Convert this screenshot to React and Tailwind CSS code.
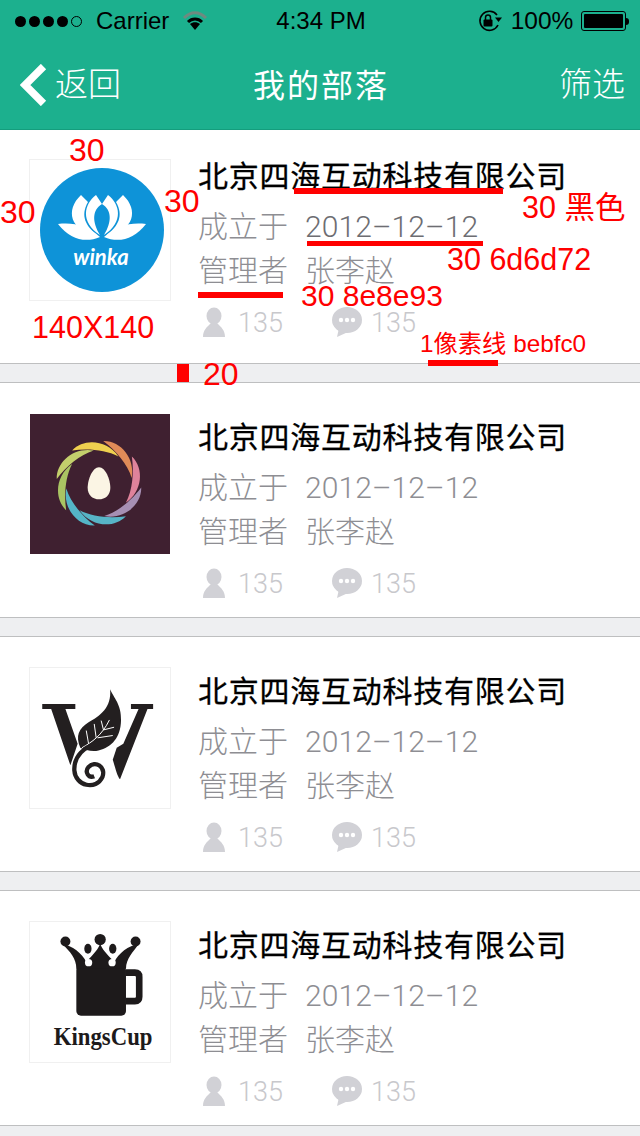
const cjk = "font-['Liberation_Sans','Noto_Sans_CJK_SC',sans-serif]";

function Winka() {
  return (
    <svg viewBox="0 0 140 140" className="w-full h-full">
      <circle cx="72" cy="70" r="62" fill="#0e93d8" />
      <g fill="#fff">
        <path d="M28 64C44 62 58 66 70 77C56 83 40 80 28 64Z" />
        <path d="M116 64C100 62 86 66 74 77C88 83 104 80 116 64Z" />
        <path d="M51 35C35 50 40 71 67 75C56 66 50 56 58 42Z" />
        <path d="M93 35C109 50 104 71 77 75C88 66 94 56 86 42Z" />
        <path d="M66 35C54 44 50 62 70 75C62 62 62 50 72 44Z" />
        <path d="M78 35C90 44 94 62 74 75C82 62 82 50 72 44Z" />
      </g>
      <text x="71" y="105" textAnchor="middle" fill="#fff" fontSize="22" fontWeight="700" fontStyle="italic" fontFamily="Lato, sans-serif">winka</text>
    </svg>
  );
}

function Egg() {
  const colors = ["#efd04f", "#e08b58", "#df839b", "#a68fb3", "#57b4c6", "#54b5c7", "#a9c463", "#c3cf6c"];
  return (
    <svg viewBox="30 27 420 420" className="w-full h-full">
      <rect x="30" y="27" width="420" height="420" fill="#3f2030" />
      <g transform="translate(237 235)">
        {colors.map((c, i) => (
          <path key={c + i} transform={`rotate(${i * 45}) scale(1.12)`} fill={c} d="M-72 -88C-40 -122 22 -116 52 -72C18 -90 -30 -94 -72 -88Z" />
        ))}
        <path d="M0 -48C20 -48 34 -10 34 14C34 36 18 48 0 48C-18 48 -34 36 -34 14C-34 -10 -20 -48 0 -48Z" fill="#fbf5e4" />
      </g>
    </svg>
  );
}

function Vine() {
  return (
    <svg viewBox="28 21 423 423" className="w-full h-full">
      <g fill="#231f20">
        <path d="M65 130H165V145H135L172 250L150 315L92 145H65Z" />
        <path d="M333 130H400V145H383L300 357C292 350 285 320 278 298L290 262L310 250L356 145H333Z" />
        <path d="M270 85C280 110 305 130 303 180C302 230 275 262 235 270C215 275 195 268 180 262C165 225 175 205 205 185C240 165 275 140 270 85Z" stroke="#fff" strokeWidth="5" paintOrder="stroke" />
      </g>
      <g fill="none" stroke="#fff" strokeWidth="3">
        <path d="M185 262C215 245 245 225 268 178" />
        <path d="M232 232L278 225M250 208L282 200M205 250L198 210M228 232L222 190M250 208L243 180" />
      </g>
      <path d="M240 248C190 255 160 290 162 330C165 378 228 392 247 350C258 318 225 300 205 320C192 335 205 355 222 348" fill="none" stroke="#231f20" strokeWidth="13" />
    </svg>
  );
}

function Cup() {
  return (
    <svg viewBox="28 19 423 423" className="w-full h-full">
      <g fill="#1d1a1b">
        <rect x="168" y="150" width="150" height="152" rx="14" />
        <path d="M318 172H345Q358 172 358 185V245Q358 258 345 258H318" fill="none" stroke="#1d1a1b" strokeWidth="20" />
        <circle cx="135" cy="78" r="15" />
        <circle cx="240" cy="72" r="17" />
        <circle cx="347" cy="78" r="15" />
        <path d="M125 85C150 110 168 130 168 160H318C318 130 340 110 357 85C325 90 295 115 283 140C270 125 250 110 240 85C230 110 210 125 198 140C186 115 155 90 125 85Z" />
        <ellipse cx="203" cy="100" rx="11" ry="15" />
        <ellipse cx="278" cy="100" rx="11" ry="15" />
      </g>
      <circle cx="205" cy="142" r="11" fill="#fff" />
      <circle cx="276" cy="142" r="11" fill="#fff" />
      <text x="249" y="392" textAnchor="middle" textLength="298" lengthAdjust="spacingAndGlyphs" fill="#1d1a1b" fontSize="76" fontWeight="700" fontFamily="'Liberation Serif', serif">KingsCup</text>
    </svg>
  );
}

function Person() {
  return (
    <svg viewBox="0 0 22 30" className="w-[22px] h-[30px]">
      <ellipse cx="11" cy="9" rx="7.5" ry="8.5" fill="#d1d1d6" />
      <path d="M0 30C0 23 4 20 8 16H14C18 20 22 23 22 30Z" fill="#d1d1d6" />
    </svg>
  );
}

function Bubble() {
  return (
    <svg viewBox="0 0 30 30" className="w-[30px] h-[30px]">
      <ellipse cx="15" cy="13" rx="15" ry="13" fill="#d1d1d6" />
      <path d="M7 21L5 30L16 25Z" fill="#d1d1d6" />
      <circle cx="9" cy="13" r="2.2" fill="#fff" />
      <circle cx="15" cy="13" r="2.2" fill="#fff" />
      <circle cx="21" cy="13" r="2.2" fill="#fff" />
    </svg>
  );
}

function Card({ first, logo, framed, dateClass }) {
  return (
    <section className={`flex bg-white pl-[29px] border-b border-[#bebfc0] mb-[18px] ${first ? "h-[234px]" : "h-[236px] border-t"}`}>
      <div className={`w-[142px] h-[142px] shrink-0 ${first ? "mt-[29px]" : "mt-[30px]"} ${framed ? "border border-[#f0f0f0]" : "p-px"}`}>
        {logo}
      </div>
      <div className={`ml-[27px] flex flex-col ${first ? "pt-[21px]" : "pt-[29px]"}`}>
        <div className="h-[46px] flex items-center text-[30px] text-black font-normal tracking-[0.75px] [-webkit-text-stroke:0.3px_#000] font-['Noto_Sans_CJK_SC',sans-serif]">北京四海互动科技有限公司</div>
        <div className="mt-[5px] h-[44px] flex items-center text-[30px] font-['Noto_Sans_CJK_SC',sans-serif] font-light">
          <span className="w-[107px] text-[#8e8e93]">成立于</span>
          <span className={`pt-[4px] font-['Roboto',sans-serif] font-light tracking-[0.1px] ${dateClass}`}>2012–12–12</span>
        </div>
        <div className="h-[44px] flex items-center text-[30px] text-[#8e8e93] font-['Noto_Sans_CJK_SC',sans-serif] font-light">
          <span className="w-[107px]">管理者</span>
          <span>张李赵</span>
        </div>
        <div className="mt-[10px] h-[44px] flex items-center text-[27px] text-[#c8c8cc] font-['Roboto',sans-serif] font-light">
          <span className="ml-[5px]"><Person /></span>
          <span className="ml-[13px] w-[94px] pt-[2px]">135</span>
          <Bubble />
          <span className="ml-[9px] pt-[2px]">135</span>
        </div>
      </div>
    </section>
  );
}

function StatusBar() {
  return (
    <div className="h-[42px] relative flex items-center text-black text-[24px] font-['Liberation_Sans',sans-serif]">
      <div className="ml-[15px] flex items-center gap-[3px]">
        <span className="w-[11px] h-[11px] rounded-full bg-black" />
        <span className="w-[11px] h-[11px] rounded-full bg-black" />
        <span className="w-[11px] h-[11px] rounded-full bg-black" />
        <span className="w-[11px] h-[11px] rounded-full bg-black" />
        <span className="w-[11px] h-[11px] rounded-full border border-black" />
      </div>
      <span className="ml-[14px]">Carrier</span>
      <svg viewBox="0 0 26 20" className="ml-[13px] w-[26px] h-[20px]">
        <path d="M2 7C9 0 17 0 24 7" fill="none" stroke="#6f8a80" strokeWidth="3" />
        <path d="M6 11C10 7 16 7 20 11" fill="none" stroke="#000" strokeWidth="3" />
        <path d="M8 13C11 10.5 15 10.5 18 13L13 19Z" fill="#000" />
      </svg>
      <span className="ml-[68px]">4:34 PM</span>
      <svg viewBox="0 0 26 22" className="ml-[111px] w-[26px] h-[22px]">
        <path d="M20 5A9.5 9.5 0 1 0 21 15" fill="none" stroke="#000" strokeWidth="1.6" />
        <path d="M18 7.5H25L21.5 12Z" fill="#000" />
        <rect x="6.5" y="9.5" width="9" height="7" rx="1" fill="#000" />
        <path d="M8.5 10V7.5A2.5 2.5 0 0 1 13.5 7.5V10" fill="none" stroke="#000" strokeWidth="1.5" />
      </svg>
      <span className="ml-[8px] text-[24.5px]">100%</span>
      <div className="ml-[8px] w-[45px] h-[20px] border border-black rounded-[3px] p-[2px]">
        <div className="w-full h-full bg-black rounded-[1px]" />
      </div>
      <span className="w-[3px] h-[7px] bg-black rounded-r-sm" />
    </div>
  );
}

function Header() {
  return (
    <header className="h-[130px] bg-[#1cb08e] border-b border-[#149d7d]">
      <StatusBar />
      <nav className={`h-[87px] flex items-center text-white text-[32px] ${cjk}`}>
        <div className="flex-1 flex items-center pl-[20px]">
          <svg viewBox="0 0 27 42" className="w-[27px] h-[42px] -mt-[2px]">
            <path d="M23.5 2.5L5 21L23.5 39.5" fill="none" stroke="#fff" strokeWidth="7.5" />
          </svg>
          <span className="ml-[8px] pb-[6px] text-[33px] font-light font-['Noto_Sans_CJK_SC',sans-serif]">返回</span>
        </div>
        <div className="mr-[3px] pb-[6px] font-['Noto_Sans_CJK_SC',sans-serif] tracking-[2px]">我的部落</div>
        <div className="flex-1 text-right pr-[15px] pb-[6px] text-[33px] font-light font-['Noto_Sans_CJK_SC',sans-serif]">筛选</div>
      </nav>
    </header>
  );
}

function Notes() {
  const text = "absolute text-[#ff0000] leading-none whitespace-nowrap font-['Liberation_Sans','Noto_Sans_CJK_SC',sans-serif]";
  return (
    <>
      <span className={`${text} left-[69px] top-[134px] text-[32px]`}>30</span>
      <span className={`${text} left-[0px] top-[196px] text-[32px]`}>30</span>
      <span className={`${text} left-[164px] top-[185px] text-[32px]`}>30</span>
      <span className={`${text} left-[32px] top-[312px] text-[30.5px]`}>140X140</span>
      <span className={`${text} left-[522px] top-[192px] text-[30.5px]`}>30 黑色</span>
      <span className={`${text} left-[447px] top-[244px] text-[30.5px]`}>30 6d6d72</span>
      <span className={`${text} left-[301px] top-[281px] text-[30px]`}>30 8e8e93</span>
      <span className={`${text} left-[420px] top-[332px] text-[24.3px]`}>1像素线 bebfc0</span>
      <span className={`${text} left-[203px] top-[358px] text-[32px]`}>20</span>
      <span className="absolute left-[294px] top-[188px] w-[209px] h-[6px] bg-[#ff0000]" />
      <span className="absolute left-[307px] top-[241px] w-[176px] h-[5px] bg-[#ff0000]" />
      <span className="absolute left-[198px] top-[292px] w-[85px] h-[6px] bg-[#ff0000]" />
      <span className="absolute left-[428px] top-[360px] w-[70px] h-[6px] bg-[#ff0000]" />
      <span className="absolute left-[177px] top-[364px] w-[12px] h-[18px] bg-[#ff0000]" />
    </>
  );
}

export default function App() {
  return (
    <div className="relative w-[640px] h-[1136px] overflow-hidden bg-[#eeeff1]">
      <Header />
      <Card first framed logo={<Winka />} dateClass="text-[#6d6d72]" />
      <Card logo={<Egg />} dateClass="text-[#8e8e93]" />
      <Card framed logo={<Vine />} dateClass="text-[#8e8e93]" />
      <Card framed logo={<Cup />} dateClass="text-[#8e8e93]" />
      <Notes />
    </div>
  );
}
